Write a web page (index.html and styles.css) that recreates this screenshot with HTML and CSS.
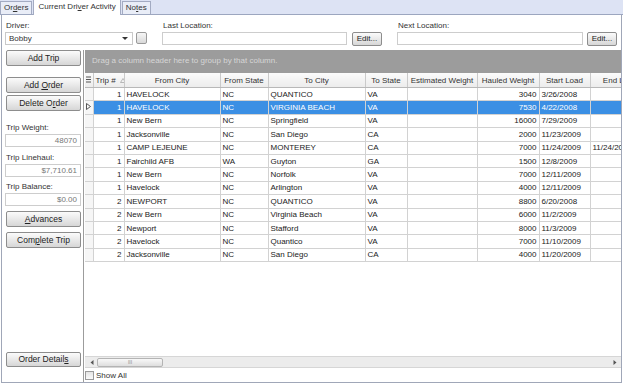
FILE: index.html
```html
<!DOCTYPE html>
<html>
  <head>
    <meta charset="utf-8"/>
    <title>Current Driver Activity</title>
    <link rel="stylesheet" href="styles.css">
  </head>
  <body>
  <div class="tabs">
    <span class="tab">Or<u>d</u>ers</span>
    <span class="tab active">Current Dri<u>v</u>er Activity</span>
    <span class="tab">No<u>t</u>es</span>
  </div>
  <div class="panel">
    <div class="topbar">
      <div class="field">
        <label class="label">Driver:</label>
        <div class="line">
          <div class="combo">Bobby<span class="arrow"></span></div>
          <span class="dots"></span>
        </div>
      </div>
      <div class="field loc">
        <label class="label">Last Location:</label>
        <div class="line">
          <span class="txt wide"></span>
          <span class="btn edit">Edit...</span>
        </div>
      </div>
      <div class="field loc">
        <label class="label">Next Location:</label>
        <div class="line">
          <span class="txt wide2"></span>
          <span class="btn edit e2">Edit...</span>
        </div>
      </div>
    </div>
    <div class="main">
      <div class="side">
        <span class="btn sbtn">Add Trip</span>
        <span class="btn sbtn m-order">Add <u>O</u>rder</span>
        <span class="btn sbtn m-del">Delete O<u>r</u>der</span>
        <label class="slabel first">Trip Weight:</label>
        <span class="txt sval">48070</span>
        <label class="slabel">Trip Linehaul:</label>
        <span class="txt sval">$7,710.61</span>
        <label class="slabel bal">Trip Balance:</label>
        <span class="txt sval">$0.00</span>
        <span class="btn sbtn m-adv"><u>A</u>dvances</span>
        <span class="btn sbtn m-adv">Com<u>p</u>lete Trip</span>
        <span class="btn sbtn m-det">Order Detail<u>s</u></span>
      </div>
      <div class="gridcol">
        <div class="grid">
          <div class="grouppanel">Drag a column header here to group by that column.</div>
          <div class="tablewrap">
            <table class="data">
              <colgroup>
                <col style="width:8px"><col style="width:31px"><col style="width:96px"><col style="width:48px"><col style="width:97px">
                <col style="width:42px"><col style="width:70px"><col style="width:62px"><col style="width:51px"><col style="width:60px">
              </colgroup>
              <thead>
                <tr>
                  <th class="ind"><svg width="5" height="7" viewBox="0 0 5 7"><path d="M0 1h5M0 3.5h5M0 6h5" stroke="#555" stroke-width="1"/></svg></th>
                  <th class="left">Trip # <svg class="sort" width="6" height="5" viewBox="0 0 6 5"><path d="M3 0.5L5.5 4.5H0.5Z" fill="none" stroke="#aaa" stroke-width="0.8"/></svg></th>
                  <th>From City</th>
                  <th>From State</th>
                  <th>To City</th>
                  <th>To State</th>
                  <th>Estimated Weight</th>
                  <th>Hauled Weight</th>
                  <th>Start Load</th>
                  <th>End Load</th>
                </tr>
              </thead>
              <tbody>
                <tr><td class="ind"></td><td class="num">1</td><td>HAVELOCK</td><td>NC</td><td>QUANTICO</td><td>VA</td><td></td><td class="num">3040</td><td>3/26/2008</td><td></td></tr>
                <tr class="sel"><td class="ind"><svg width="5" height="7" viewBox="0 0 5 7"><path d="M0.5 0.5L4.5 3.5L0.5 6.5Z" fill="none" stroke="#444" stroke-width="0.9"/></svg></td><td class="num">1</td><td>HAVELOCK</td><td>NC</td><td>VIRGINIA BEACH</td><td>VA</td><td></td><td class="num">7530</td><td>4/22/2008</td><td></td></tr>
                <tr><td class="ind"></td><td class="num">1</td><td>New Bern</td><td>NC</td><td>Springfield</td><td>VA</td><td></td><td class="num">16000</td><td>7/29/2009</td><td></td></tr>
                <tr><td class="ind"></td><td class="num">1</td><td>Jacksonville</td><td>NC</td><td>San Diego</td><td>CA</td><td></td><td class="num">2000</td><td>11/23/2009</td><td></td></tr>
                <tr><td class="ind"></td><td class="num">1</td><td>CAMP LEJEUNE</td><td>NC</td><td>MONTEREY</td><td>CA</td><td></td><td class="num">7000</td><td>11/24/2009</td><td>11/24/2009</td></tr>
                <tr><td class="ind"></td><td class="num">1</td><td>Fairchild AFB</td><td>WA</td><td>Guyton</td><td>GA</td><td></td><td class="num">1500</td><td>12/8/2009</td><td></td></tr>
                <tr><td class="ind"></td><td class="num">1</td><td>New Bern</td><td>NC</td><td>Norfolk</td><td>VA</td><td></td><td class="num">7000</td><td>12/11/2009</td><td></td></tr>
                <tr><td class="ind"></td><td class="num">1</td><td>Havelock</td><td>NC</td><td>Arlington</td><td>VA</td><td></td><td class="num">4000</td><td>12/11/2009</td><td></td></tr>
                <tr><td class="ind"></td><td class="num">2</td><td>NEWPORT</td><td>NC</td><td>QUANTICO</td><td>VA</td><td></td><td class="num">8800</td><td>6/20/2008</td><td></td></tr>
                <tr><td class="ind"></td><td class="num">2</td><td>New Bern</td><td>NC</td><td>Virginia Beach</td><td>VA</td><td></td><td class="num">6000</td><td>11/2/2009</td><td></td></tr>
                <tr><td class="ind"></td><td class="num">2</td><td>Newport</td><td>NC</td><td>Stafford</td><td>VA</td><td></td><td class="num">8000</td><td>11/3/2009</td><td></td></tr>
                <tr><td class="ind"></td><td class="num">2</td><td>Havelock</td><td>NC</td><td>Quantico</td><td>VA</td><td></td><td class="num">7000</td><td>11/10/2009</td><td></td></tr>
                <tr><td class="ind"></td><td class="num">2</td><td>Jacksonville</td><td>NC</td><td>San Diego</td><td>CA</td><td></td><td class="num">4000</td><td>11/20/2009</td><td></td></tr>
              </tbody>
            </table>
          </div>
          <div class="hscroll">
            <svg class="arr" width="4" height="5" viewBox="0 0 4 5"><path d="M3.5 0L0.5 2.5L3.5 5Z" fill="#555"/></svg>
            <span class="thumb">III</span>
            <svg class="arr right" width="4" height="5" viewBox="0 0 4 5"><path d="M0.5 0L3.5 2.5L0.5 5Z" fill="#555"/></svg>
          </div>
        </div>
        <div class="showall"><span class="chk"></span>Show All</div>
      </div>
    </div>
  </div>
  </body>
</html>
```
FILE: styles.css
```css
body{
  margin: 0;
  width: 623px;
  height: 383px;
  overflow: hidden;
  background: #fff;
  color: #222;
  font: 8px "Liberation Sans", Arial, sans-serif;
}
u{
  text-decoration: underline;
}
.tabs{
  display: flex;
  align-items: flex-end;
  height: 14px;
  background: #dde3f4;
  border-bottom: 1px solid #9ca6bf;
}
.tab{
  height: 12px;
  line-height: 12px;
  padding: 0 3px;
  margin-right: 1px;
  background: #e9edf7;
  border: 1px solid #a3abc2;
  border-bottom: 0;
  color: #333;
}
.tab.active{
  height: 15px;
  line-height: 13px;
  margin-bottom: -1px;
  margin-right: 1px;
  padding: 0 4px;
  background: #fff;
}
.panel{
  box-sizing: border-box;
  width: 621px;
  height: 368px;
  margin-left: 1px;
  border: 1px solid #a0a7b8;
  border-top: 0;
  display: flex;
  flex-direction: column;
}
.topbar{
  box-sizing: border-box;
  height: 35px;
  padding: 6px 0 0 3px;
  display: flex;
}
.field{
  display: flex;
  flex-direction: column;
}
.loc{
  margin-left: 15px;
}
.label{
  display: block;
  height: 10px;
  line-height: 10px;
  margin: 0 0 1px 1px;
  color: #333;
}
.line{
  display: flex;
  align-items: flex-start;
}
.combo{
  box-sizing: border-box;
  width: 128px;
  height: 13px;
  line-height: 11px;
  padding-left: 3px;
  border: 1px solid #c9c9c9;
  position: relative;
  color: #333;
}
.arrow{
  position: absolute;
  right: 4px;
  top: 4px;
  border-left: 3px solid transparent;
  border-right: 3px solid transparent;
  border-top: 3px solid #333;
}
.dots{
  box-sizing: border-box;
  width: 11px;
  height: 12px;
  margin-left: 3px;
  border: 1px solid #9a9a9a;
  border-radius: 2px;
  background: linear-gradient(#f6f6f6, #d9d9d9);
}
.txt{
  box-sizing: border-box;
  display: block;
  height: 13px;
  border: 1px solid #cdcdcd;
  background: #fff;
}
.wide{
  width: 185px;
}
.wide2{
  width: 186px;
}
.btn{
  box-sizing: border-box;
  display: block;
  text-align: center;
  border: 1px solid #8d8d8d;
  border-radius: 2px;
  background: linear-gradient(#fbfbfb, #e9e9e9 50%, #d6d6d6);
  color: #222;
}
.edit{
  width: 30px;
  height: 14px;
  line-height: 12px;
  margin-left: 5px;
}
.e2{
  margin-left: 4px;
}
.main{
  flex: 1;
  display: flex;
}
.side{
  box-sizing: border-box;
  width: 82px;
  padding: 0 1px 0 4px;
  border-right: 1px solid #9c9c9c;
  display: flex;
  flex-direction: column;
}
.sbtn{
  width: 75px;
  height: 16px;
  line-height: 14px;
  font-size: 8.5px;
}
.m-order{
  margin-top: 11px;
}
.m-del{
  margin-top: 2px;
}
.m-adv{
  margin-top: 5px;
}
.m-det{
  margin-top: auto;
  margin-bottom: 15px;
  height: 15px;
  line-height: 13px;
}
.slabel{
  display: block;
  height: 10px;
  line-height: 10px;
  margin-top: 6px;
  margin-bottom: 1px;
  color: #333;
}
.slabel.first{
  margin-top: 12px;
}
.slabel.bal{
  margin-top: 5px;
}
.sval{
  width: 76px;
  margin-left: -1px;
  line-height: 11px;
  padding-right: 3px;
  text-align: right;
  color: #777;
}
.gridcol{
  flex: 1;
  margin-left: 1px;
  display: flex;
  flex-direction: column;
  min-width: 0;
}
.grid{
  height: 318px;
  display: flex;
  flex-direction: column;
  overflow: hidden;
}
.grouppanel{
  height: 23px;
  line-height: 21px;
  padding-left: 7px;
  background: #9c9c9c;
  color: #d6d6d6;
  white-space: nowrap;
}
.tablewrap{
  flex: 1;
  overflow: hidden;
}
.data{
  width: 565px;
  table-layout: fixed;
  border-collapse: collapse;
}
.data th{
  height: 14px;
  padding: 0 2px;
  font-weight: normal;
  color: #333;
  background: linear-gradient(#fbfbfb, #ececec);
  border-right: 1px solid #cacaca;
  border-bottom: 1px solid #b8b8b8;
  white-space: nowrap;
  overflow: hidden;
  text-align: center;
}
.data th.left{
  text-align: left;
}
.sort{
  margin-left: 2px;
}
.data th.ind{
  padding: 0;
}
.data tbody tr{
  height: 13.4px;
}
.data td{
  padding: 0 2px;
  border-right: 1px solid #d2d2d2;
  border-bottom: 1px solid #d2d2d2;
  white-space: nowrap;
  overflow: hidden;
  color: #222;
}
.data td.ind{
  padding: 0 0 0 1px;
  background: #f6f6f6;
}
.data td.num{
  text-align: right;
}
.data tr.sel td{
  background: #3b8fe4;
  color: #fff;
}
.data tr.sel td.ind{
  background: #f6f6f6;
}
.hscroll{
  box-sizing: border-box;
  height: 12px;
  display: flex;
  align-items: center;
  background: #ececec;
  border-top: 1px solid #d6d6d6;
  border-bottom: 1px solid #d6d6d6;
}
.arr{
  margin-left: 5px;
}
.arr.right{
  margin-left: auto;
  margin-right: 4px;
}
.thumb{
  box-sizing: border-box;
  width: 66px;
  height: 9px;
  line-height: 7px;
  margin-left: 3px;
  text-align: center;
  font-size: 5px;
  color: #888;
  border: 1px solid #b4b4b4;
  border-radius: 2px;
  background: linear-gradient(#f8f8f8, #dedede);
}
.showall{
  display: flex;
  align-items: center;
  height: 14px;
  color: #333;
}
.chk{
  box-sizing: border-box;
  width: 9px;
  height: 9px;
  margin: 0 2px 0 0;
  border: 1px solid #9a9a9a;
  background: linear-gradient(#e4e4e4, #fafafa);
}
```
